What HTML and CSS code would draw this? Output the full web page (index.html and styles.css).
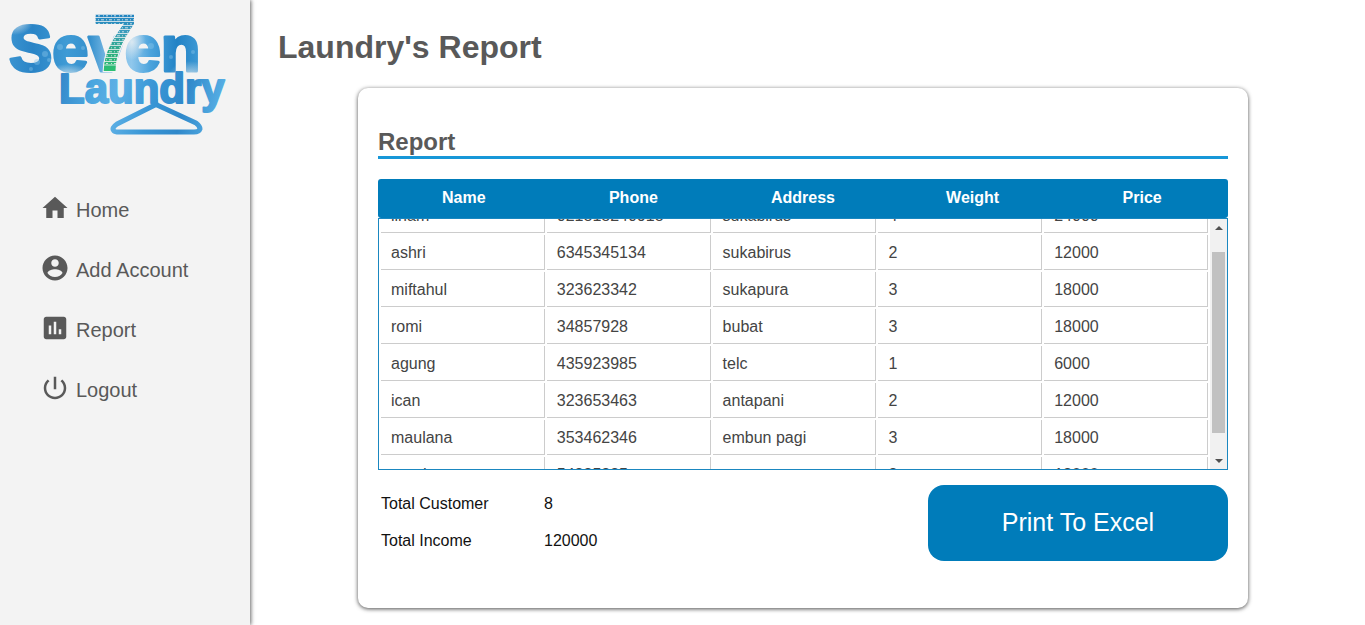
FILE: index.html
```html
<!DOCTYPE html>
<html lang="en">
<head>
<meta charset="utf-8">
<title>Laundry's Report</title>
<link rel="stylesheet" href="styles.css">
</head>
<body>
<aside class="sidebar">
  <svg class="logo" viewBox="0 0 250 145" role="img" aria-label="Seven Laundry">
    <defs>
      <linearGradient id="word" gradientUnits="userSpaceOnUse" x1="10" y1="0" x2="200" y2="0">
        <stop offset="0" stop-color="#3a93d0"/><stop offset="0.12" stop-color="#2a84c6"/>
        <stop offset="0.3" stop-color="#3f9bd5"/><stop offset="0.42" stop-color="#3590cd"/>
        <stop offset="0.52" stop-color="#7fbde6"/><stop offset="0.64" stop-color="#8fc7ec"/>
        <stop offset="0.74" stop-color="#4ba3dc"/><stop offset="0.88" stop-color="#2182c5"/><stop offset="1" stop-color="#3f9ad5"/>
      </linearGradient>
      <linearGradient id="sub" gradientUnits="userSpaceOnUse" x1="60" y1="75" x2="225" y2="110">
        <stop offset="0" stop-color="#3488ca"/><stop offset="0.2" stop-color="#4aa6df"/><stop offset="0.35" stop-color="#5db0e5"/>
        <stop offset="0.55" stop-color="#3a97d6"/><stop offset="0.75" stop-color="#2f88ca"/><stop offset="1" stop-color="#5cb4e8"/>
      </linearGradient>
      <linearGradient id="tint" x1="0" y1="0" x2="0" y2="1">
        <stop offset="0" stop-color="#1f82c0"/><stop offset="0.3" stop-color="#3c9dbc"/>
        <stop offset="0.65" stop-color="#2dae80"/><stop offset="1" stop-color="#2cc36f"/>
      </linearGradient>
      <radialGradient id="haze">
        <stop offset="0" stop-color="#f3f3f3" stop-opacity="0.75"/><stop offset="1" stop-color="#f3f3f3" stop-opacity="0"/>
      </radialGradient>
      <pattern id="print" patternUnits="userSpaceOnUse" x="90" y="14" width="56" height="60">
        <rect width="56" height="60" fill="url(#tint)"/>
        <g stroke="#f3f3f3" stroke-width="0.8" fill="none">
          <path d="M0 3.500h56M0 7.500h56M0 11.500h56M0 15.500h56M0 19.500h56M0 23.500h56M0 27.500h56M0 31.500h56M0 35.500h56M0 39.500h56M0 43.500h56M0 47.500h56M0 51h56"/>
          <path d="M0 1.800h56M0 9.800h56M0 17.800h56M0 25.800h56M0 33.800h56M0 41.800h56M0 49.500h56" stroke-dasharray="2 3 1 2"/>
          <path d="M0 5.800h56M0 13.800h56M0 21.800h56M0 29.800h56M0 37.800h56M0 45.800h56" stroke-dasharray="1 2 3 2"/>
        </g>
      </pattern>
    </defs>
    <text class="logo-word logo-seven" x="9" y="71" fill="url(#word)" stroke="url(#word)">Seven</text>
    <g fill="url(#haze)">
      <ellipse cx="15" cy="22" rx="18" ry="13"/>
      <ellipse cx="68" cy="76" rx="24" ry="12"/>
      <ellipse cx="132" cy="42" rx="14" ry="18"/>
      <ellipse cx="190" cy="77" rx="22" ry="16"/>
    </g>
    <g fill="#8cc8ec" fill-opacity="0.4">
      <circle cx="37" cy="62" r="3"/><circle cx="45" cy="54" r="3"/><circle cx="31" cy="69" r="2"/><circle cx="49" cy="60" r="2"/>
      <circle cx="60" cy="47" r="3"/><circle cx="83" cy="48" r="2"/><circle cx="151" cy="46" r="3"/><circle cx="171" cy="57" r="2"/><circle cx="193" cy="52" r="2"/>
    </g>
    <text class="logo-word logo-laundry" x="59" y="103" fill="url(#sub)" stroke="url(#sub)">Laundry</text>
    <text class="logo-digit" x="92" y="71" fill="url(#print)">7</text>
    <path d="M155 105L117 124Q111 128 114 131Q115 132 119 132H194Q199 132 200 129Q200 126 196 123L157 105Q155 103 155 99" fill="none" stroke="url(#sub)" stroke-width="5" stroke-linejoin="round"/>
  </svg>
  <nav class="menu">
    <a class="menu-link" href="#home"><svg class="menu-icon" viewBox="0 0 24 24" aria-hidden="true"><path d="M10 20v-6h4v6h5v-8h3L12 3 2 12h3v8z"/></svg>Home</a>
    <a class="menu-link" href="#account"><svg class="menu-icon" viewBox="0 0 24 24" aria-hidden="true"><path d="M12 2C6.480 2 2 6.480 2 12s4.480 10 10 10 10-4.480 10-10S17.520 2 12 2zm0 3c1.660 0 3 1.340 3 3s-1.340 3-3 3-3-1.340-3-3 1.340-3 3-3zm0 14.200c-2.500 0-4.710-1.280-6-3.220.030-1.990 4-3.080 6-3.080 1.990 0 5.970 1.090 6 3.080-1.290 1.940-3.500 3.220-6 3.220z"/></svg>Add Account</a>
    <a class="menu-link" href="#report"><svg class="menu-icon" viewBox="0 0 24 24" aria-hidden="true"><path d="M19 3H5c-1.100 0-2 .9-2 2v14c0 1.100.9 2 2 2h14c1.100 0 2-.9 2-2V5c0-1.100-.9-2-2-2zM9 17H7v-7h2v7zm4 0h-2V7h2v10zm4 0h-2v-4h2v4z"/></svg>Report</a>
    <a class="menu-link" href="#logout"><svg class="menu-icon" viewBox="0 0 24 24" aria-hidden="true"><path d="M13 3h-2v10h2V3zm4.830 2.170l-1.420 1.420C17.990 7.860 19 9.810 19 12c0 3.870-3.130 7-7 7s-7-3.130-7-7c0-2.190 1.010-4.140 2.580-5.420L6.170 5.170C4.230 6.820 3 9.260 3 12c0 4.970 4.030 9 9 9s9-4.030 9-9c0-2.740-1.230-5.180-3.170-6.830z"/></svg>Logout</a>
  </nav>
</aside>
<main class="content">
  <h1 class="page-title">Laundry's Report</h1>
  <section class="card">
    <h2 class="card-title">Report</h2>
    <table class="head-table">
      <thead><tr><th>Name</th><th>Phone</th><th>Address</th><th>Weight</th><th>Price</th></tr></thead>
    </table>
    <div class="body-frame">
      <div class="scroller" id="rows" tabindex="0">
        <table class="body-table">
          <tbody>
            <tr><td>ilham</td><td>021818240918</td><td>sukabirus</td><td>4</td><td>24000</td></tr>
            <tr><td>ashri</td><td>6345345134</td><td>sukabirus</td><td>2</td><td>12000</td></tr>
            <tr><td>miftahul</td><td>323623342</td><td>sukapura</td><td>3</td><td>18000</td></tr>
            <tr><td>romi</td><td>34857928</td><td>bubat</td><td>3</td><td>18000</td></tr>
            <tr><td>agung</td><td>435923985</td><td>telc</td><td>1</td><td>6000</td></tr>
            <tr><td>ican</td><td>323653463</td><td>antapani</td><td>2</td><td>12000</td></tr>
            <tr><td>maulana</td><td>353462346</td><td>embun pagi</td><td>3</td><td>18000</td></tr>
            <tr><td>nanda</td><td>54235235</td><td>gegerarum</td><td>2</td><td>12000</td></tr>
          </tbody>
        </table>
      </div>
      <div class="scrollbar">
        <button class="scroll-step" id="step-up" type="button" aria-label="Scroll up"><svg class="arrow" viewBox="0 0 8 4"><path d="M0 4L4 0L8 4z"/></svg></button>
        <div class="scroll-track" id="track"><div class="scroll-thumb" id="thumb"></div></div>
        <button class="scroll-step" id="step-down" type="button" aria-label="Scroll down"><svg class="arrow" viewBox="0 0 8 4"><path d="M0 0L4 4L8 0z"/></svg></button>
      </div>
    </div>
    <div class="summary">
      <dl class="totals">
        <dt>Total Customer</dt><dd>8</dd>
        <dt>Total Income</dt><dd>120000</dd>
      </dl>
      <button class="print-button" type="button">Print To Excel</button>
    </div>
  </section>
</main>
<script src="script.js"></script>
</body>
</html>
```
FILE: styles.css
```css
* { box-sizing: border-box; }

body {
  margin: 0;
  min-height: 100vh;
  display: flex;
  background: #fff;
  font-family: "Liberation Sans", Arial, sans-serif;
  font-size: 16px;
  color: #595959;
}

.sidebar {
  flex: 0 0 250px;
  background: #f3f3f3;
  box-shadow: 1px 0 4px rgba(0, 0, 0, 0.6);
}

.logo { display: block; width: 100%; }
.logo-word { font-weight: bold; stroke-linejoin: round; }
.logo-seven { font-size: 65px; stroke-width: 3px; }
.logo-laundry { font-size: 42px; stroke-width: 2px; }
.logo-digit {
  font-size: 82px;
  font-weight: bold;
  stroke: #f3f3f3;
  stroke-width: 2px;
  paint-order: stroke;
}

.menu {
  display: flex;
  flex-direction: column;
  gap: 26px;
  padding: 48px 0 0 40px;
}

.menu-link {
  display: flex;
  align-items: center;
  gap: 6px;
  font-size: 20px;
  color: #595959;
  text-decoration: none;
}

.menu-icon {
  width: 30px;
  height: 30px;
  margin-bottom: 4px;
  fill: #595959;
}

.content {
  flex: 1;
  min-width: 0;
  padding: 28px 37px 16px 28px;
}

.page-title {
  margin: 0 0 22px;
  font-size: 32px;
  line-height: 38px;
}

.card {
  margin: 0 80px;
  padding: 40px 20px 47px;
  border-radius: 10px;
  background: #fff;
  box-shadow: 0 1px 4px rgba(0, 0, 0, 0.7);
}

.card-title {
  margin: 0 0 20px;
  border-bottom: 3px solid #1797d8;
  font-size: 24px;
  line-height: 28px;
}

.head-table,
.body-table {
  width: 100%;
  table-layout: fixed;
  border-collapse: separate;
  border-spacing: 2px;
}

.head-table {
  background: #007cba;
  border-radius: 3px;
  color: #fff;
}

.head-table th { height: 35px; padding: 0 0 2px; }

.body-frame {
  display: flex;
  height: 252px;
  border: 1px solid #1a87c0;
}

.scroller {
  flex: 1;
  overflow-y: scroll;
  scrollbar-width: none;
  outline: none;
}

.body-table td {
  height: 35px;
  padding: 2px 10px 0;
  border-right: 1px solid #ccc;
  border-bottom: 1px solid #ccc;
  color: #444;
}

.scrollbar {
  flex: 0 0 17px;
  display: flex;
  flex-direction: column;
  background: #f1f1f1;
}

.scroll-step {
  display: grid;
  place-items: center;
  height: 17px;
  padding: 0;
  border: 0;
  background: none;
}

.arrow { width: 8px; height: 4px; fill: #505050; }
.scroll-track { flex: 1; padding: 0 2px; }
.scroll-thumb { background: #c1c1c1; }

.summary {
  display: flex;
  justify-content: space-between;
  padding-top: 15px;
}

.totals {
  display: grid;
  grid-template-columns: 163px auto;
  grid-auto-rows: 37px;
  align-items: center;
  margin: 0;
  padding-left: 3px;
  color: #111;
}

.totals dd { margin: 0; }

.print-button {
  width: 300px;
  height: 76px;
  padding: 0 0 2px;
  border: 0;
  border-radius: 16px;
  background: #007cba;
  color: #fff;
  font-family: inherit;
  font-size: 25px;
}
```
FILE: script.js
```js
const rows = document.getElementById("rows");
const track = document.getElementById("track");
const thumb = document.getElementById("thumb");

function placeThumb() {
  const scale = track.clientHeight / rows.scrollHeight;
  thumb.style.height = Math.round(rows.clientHeight * scale) + "px";
  thumb.style.transform = "translateY(" + Math.floor(rows.scrollTop * scale) + "px)";
}

rows.addEventListener("scroll", placeThumb);
document.getElementById("step-up").addEventListener("click", () => rows.scrollBy(0, -37));
document.getElementById("step-down").addEventListener("click", () => rows.scrollBy(0, 37));

rows.scrollTop = 23;
placeThumb();
```
